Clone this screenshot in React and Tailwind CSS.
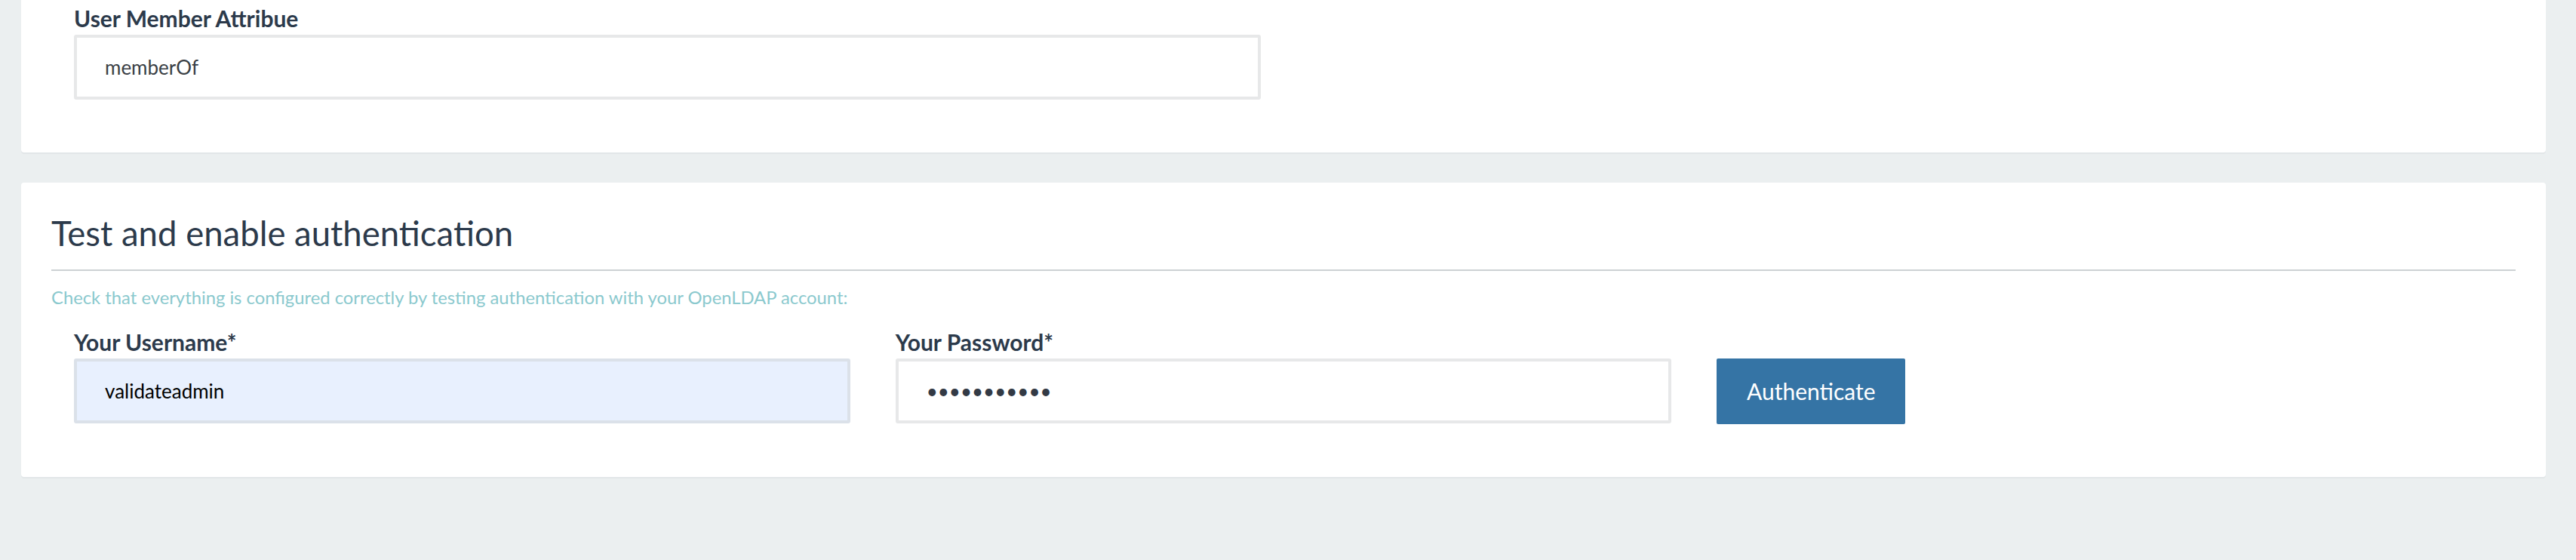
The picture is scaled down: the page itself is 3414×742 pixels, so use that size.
import React from 'react';

const Label = ({ children }) => (
  <label className="block text-[30px] leading-[36px] font-bold text-[#2c3a4b] mb-[4px]">
    {children}
  </label>
);

const App = () => {
  return (
    <div
      className="min-h-screen bg-[#ebeff0] pl-[28px] pr-[40px] pb-[110px]"
      style={{ fontFamily: 'Lato, "Open Sans", sans-serif' }}
    >
      {/* ldap settings card (scrolled, only the bottom shows) */}
      <div className="bg-white rounded-b-[4px] shadow-[0_2px_0_#e2e6e8] px-[40px] pt-[6px] pb-[70px]">
        <div className="grid grid-cols-2">
          <div className="px-[30px]">
            <Label>User Member Attribue</Label>
            <input
              type="text"
              defaultValue="memberOf"
              className="block w-full h-[86px] border-4 border-[#e7e8e9] rounded-[3px] bg-white pl-[37px] text-[26px] text-[#3a3f45] outline-none"
            />
          </div>
        </div>
      </div>

      {/* test and enable */}
      <div className="mt-[40px] bg-white rounded-[4px] shadow-[0_2px_0_#e2e6e8] px-[40px] pt-[43px] pb-[70px]">
        <h2 className="text-[45.5px] leading-[48px] font-normal text-[#2c3a4b]">
          Test and enable authentication
        </h2>
        <div className="mt-[24px] h-[2px] bg-[#cdd1d4]"></div>
        <p className="mt-[20px] text-[23.8px] leading-[30px] text-[#8bc9ce]">
          Check that everything is configured correctly by testing authentication with your OpenLDAP account:
        </p>
        <form className="mt-[26px] grid grid-cols-3" onSubmit={(e) => e.preventDefault()}>
          <div className="px-[30px]">
            <Label>Your Username*</Label>
            <input
              type="text"
              defaultValue="validateadmin"
              className="block w-full h-[86px] border-4 border-[#dbe1e9] rounded-[3px] bg-[#e8f0fe] pl-[37px] text-[26px] text-black outline-none"
            />
          </div>
          <div className="px-[30px]">
            <Label>Your Password*</Label>
            <input
              type="password"
              defaultValue="validate123"
              className="block w-full h-[86px] border-4 border-[#e7e8e9] rounded-[3px] bg-white pl-[37px] text-[26px] text-[#333a45] outline-none"
            />
          </div>
          <div className="px-[30px] pt-[40px]">
            <button
              type="submit"
              className="h-[87px] w-[250px] rounded-[2px] bg-[#3574a5] text-white text-[30px]"
            >
              Authenticate
            </button>
          </div>
        </form>
      </div>
    </div>
  );
};

export default App;
